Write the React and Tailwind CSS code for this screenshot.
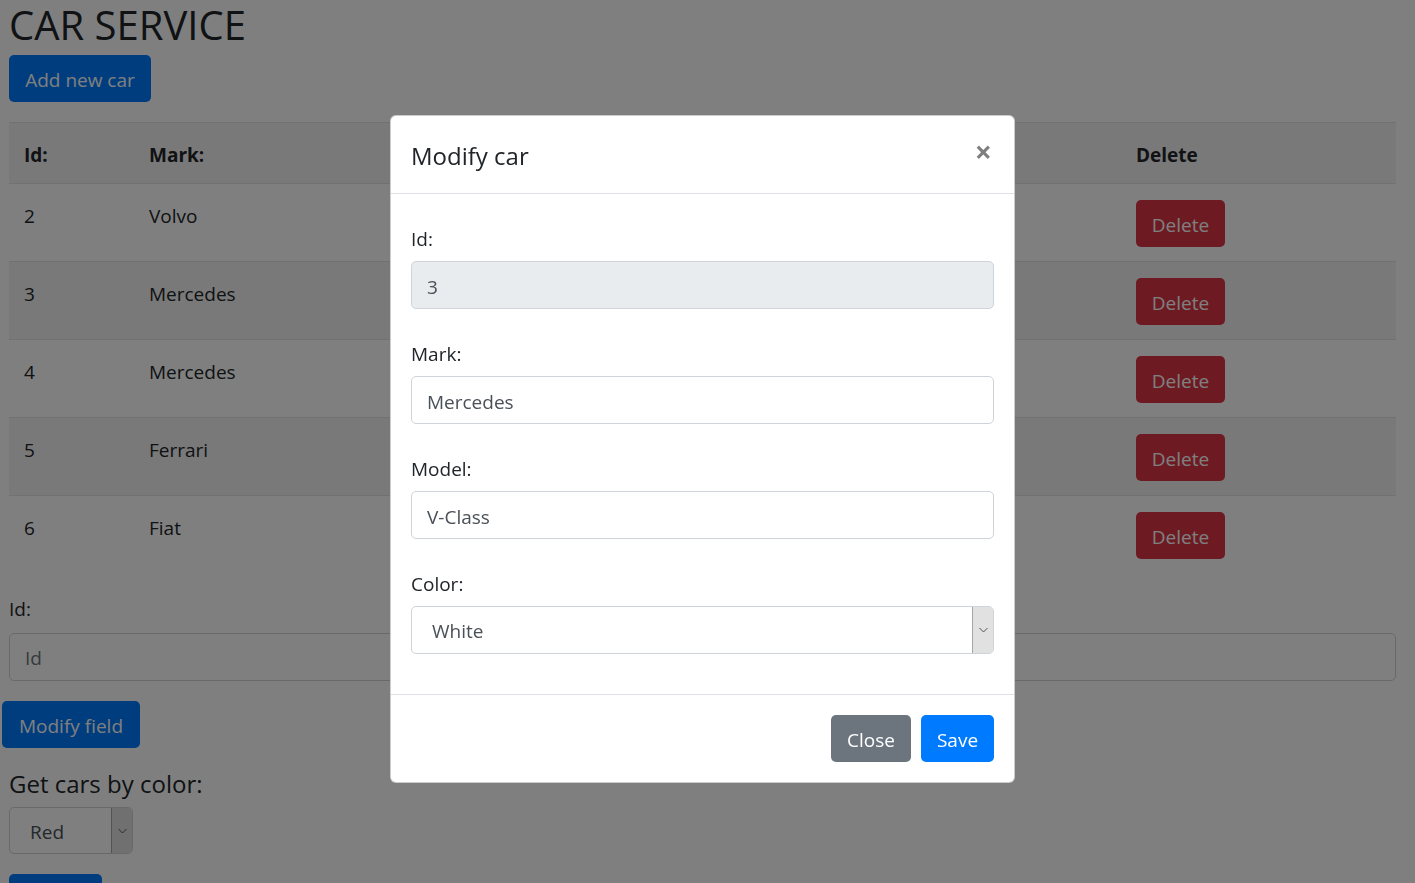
import React from 'react';

const cars = [
  { id: 2, mark: 'Volvo', model: 'XC90', color: 'Black' },
  { id: 3, mark: 'Mercedes', model: 'V-Class', color: 'White' },
  { id: 4, mark: 'Mercedes', model: 'A-Class', color: 'Red' },
  { id: 5, mark: 'Ferrari', model: 'F40', color: 'Red' },
  { id: 6, mark: 'Fiat', model: 'Punto', color: 'Blue' },
];

const cols = 'grid grid-cols-[125px_250px_250px_250px_237px_275px]';

function NativeSelect({ value, className = '' }) {
  return (
    <div className={`flex border border-[#ced4da] rounded-[5px] bg-white overflow-hidden ${className}`}>
      <div className="flex-1 flex items-center pl-[20px] pt-[2px] text-[#495057]">{value}</div>
      <div className="w-[21px] flex items-center justify-center bg-[#e1e1e1] border-l border-[#a6a6a6]">
        <svg width="9" height="6" viewBox="0 0 9 6" fill="none">
          <path d="M0.5 1 L4.5 5 L8.5 1" stroke="#555" strokeWidth="1" />
        </svg>
      </div>
    </div>
  );
}

function Field({ label, value, disabled }) {
  return (
    <div>
      <div className="leading-[30px] text-[#212529]">{label}</div>
      <div
        className={`mt-[7px] h-[48px] flex items-center px-[15px] pt-[3px] border border-[#ced4da] rounded-[5px] text-[#495057] ${
          disabled ? 'bg-[#e9ecef]' : 'bg-white'
        }`}
      >
        {value}
      </div>
    </div>
  );
}

export default function App() {
  return (
    <div className="relative min-h-screen bg-white text-[19px] leading-[30px] text-[#212529] font-['Segoe_UI','Open_Sans',sans-serif]">
      <div className="px-[9px] pb-[40px]">
        <h1 className="text-[40px] leading-[50px] mb-[5px] font-normal">CAR SERVICE</h1>
        <button className="h-[47px] w-[142px] pt-[2px] bg-[#007bff] text-white rounded-[5px]">Add new car</button>

        <div className="mt-[20px] w-[1387px]">
          <div className={`${cols} h-[61px] border-t border-[#dee2e6] bg-black/5 font-bold`}>
            <div className="px-[15px] pt-[17px]">Id:</div>
            <div className="px-[15px] pt-[17px]">Mark:</div>
            <div className="px-[15px] pt-[17px]">Model:</div>
            <div className="px-[15px] pt-[17px]">Color:</div>
            <div className="px-[15px] pt-[17px]">Modify</div>
            <div className="px-[15px] pt-[17px]">Delete</div>
          </div>
          {cars.map((c, i) => (
            <div
              key={c.id}
              className={`${cols} h-[78px] border-t border-[#dee2e6] ${i % 2 === 1 ? 'bg-black/5' : ''}`}
            >
              <div className="px-[15px] pt-[17px]">{c.id}</div>
              <div className="px-[15px] pt-[17px]">{c.mark}</div>
              <div className="px-[15px] pt-[17px]">{c.model}</div>
              <div className="px-[15px] pt-[17px]">{c.color}</div>
              <div className="px-[15px] pt-[16px]">
                <button className="h-[47px] px-[15px] bg-[#ffc107] rounded-[5px]">Modify</button>
              </div>
              <div className="px-[15px] pt-[16px]">
                <button className="h-[47px] w-[89px] pt-[2px] bg-[#dc3545] text-white rounded-[5px]">Delete</button>
              </div>
            </div>
          ))}
        </div>

        <div className="mt-[21px] leading-[30px]">Id:</div>
        <div className="mt-[9px] w-[1387px] h-[48px] flex items-center px-[15px] pt-[2px] border border-[#ced4da] rounded-[5px] text-[#6c757d]">
          Id
        </div>
        <button className="mt-[20px] -ml-[7px] h-[47px] w-[138px] pt-[2px] bg-[#007bff] text-white rounded-[5px] block">
          Modify field
        </button>
        <div className="mt-[17px] text-[24px] leading-[37px]">Get cars by color:</div>
        <NativeSelect value="Red" className="mt-[5px] w-[124px] h-[47px]" />
        <button className="mt-[20px] h-[47px] w-[93px] bg-[#007bff] text-white rounded-[5px] block">Get</button>
      </div>

      <div className="fixed inset-0 bg-black/50" />

      <div className="fixed left-[390px] top-[115px] w-[625px] bg-white rounded-[6px] border border-black/20">
        <div className="h-[78px] flex items-center justify-between px-[20px] border-b border-[#dee2e6]">
          <div className="text-[24px] leading-[37px] pt-[2px]">Modify car</div>
          <div className="text-[30px] font-bold text-black/50 leading-none -mt-[6px] mr-[2px]">×</div>
        </div>
        <div className="px-[20px] pt-[30px] pb-[40px] flex flex-col gap-[30px]">
          <Field label="Id:" value="3" disabled />
          <Field label="Mark:" value="Mercedes" />
          <Field label="Model:" value="V-Class" />
          <div>
            <div className="leading-[30px]">Color:</div>
            <NativeSelect value="White" className="mt-[7px] h-[48px]" />
          </div>
        </div>
        <div className="border-t border-[#dee2e6] px-[20px] py-[20px] flex justify-end gap-[10px]">
          <button className="h-[47px] w-[80px] pt-[2px] bg-[#6c757d] text-white rounded-[5px]">Close</button>
          <button className="h-[47px] w-[73px] pt-[2px] bg-[#007bff] text-white rounded-[5px]">Save</button>
        </div>
      </div>
    </div>
  );
}
